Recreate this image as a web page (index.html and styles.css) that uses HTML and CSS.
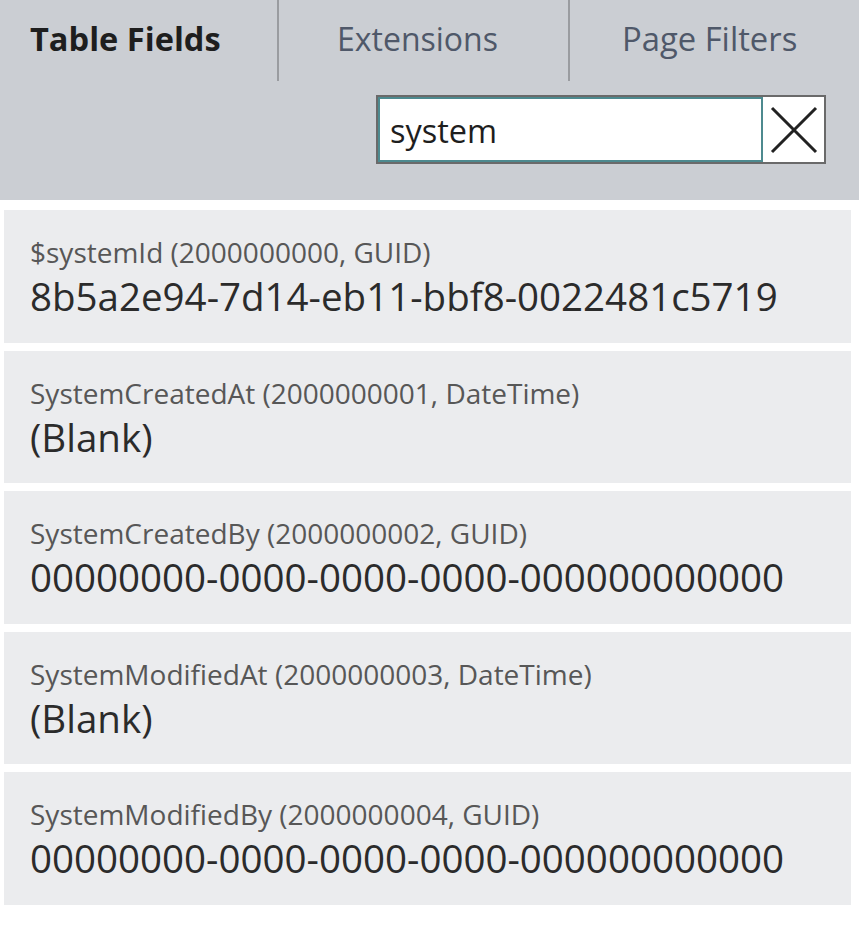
FILE: index.html
```html
<!DOCTYPE html>
<html>
<head>
<meta charset="utf-8">
<link rel="stylesheet" href="styles.css">
</head>
<body>
<div class="header">
  <div class="tabs">
    <div class="tab tab-active tab-1">Table Fields</div>
    <div class="tab tab-2">Extensions</div>
    <div class="tab tab-3">Page Filters</div>
  </div>
  <div class="search-row">
    <div class="search">
      <div class="search-input">system</div>
      <div class="search-clear">
        <svg width="48" height="48" viewBox="0 0 48 48"><path d="M2 2 L46 46 M46 2 L2 46" stroke="#222" stroke-width="3" fill="none"/></svg>
      </div>
    </div>
  </div>
</div>
<div class="list">
  <div class="card">
    <div class="label">$systemId (2000000000, GUID)</div>
    <div class="value">8b5a2e94-7d14-eb11-bbf8-0022481c5719</div>
  </div>
  <div class="card">
    <div class="label">SystemCreatedAt (2000000001, DateTime)</div>
    <div class="value">(Blank)</div>
  </div>
  <div class="card">
    <div class="label">SystemCreatedBy (2000000002, GUID)</div>
    <div class="value">00000000-0000-0000-0000-000000000000</div>
  </div>
  <div class="card">
    <div class="label">SystemModifiedAt (2000000003, DateTime)</div>
    <div class="value">(Blank)</div>
  </div>
  <div class="card">
    <div class="label">SystemModifiedBy (2000000004, GUID)</div>
    <div class="value">00000000-0000-0000-0000-000000000000</div>
  </div>
</div>
</body>
</html>
```
FILE: styles.css
```css
html, body {
  margin: 0;
  padding: 0;
  background: #ffffff;
  font-family: "Open Sans", "Noto Sans", sans-serif;
}
.header {
  background: #cbced3;
  height: 200px;
  box-sizing: border-box;
}
.tabs {
  display: flex;
  height: 81px;
}
.tab {
  font-size: 32px;
  color: #4f5869;
  padding-top: 14px;
  box-sizing: border-box;
  height: 81px;
  line-height: 50px;
}
.tab-active {
  font-weight: 700;
  font-size: 32.6px;
  color: #1e1e1e;
}
.tab-1 {
  width: 279px;
  padding-left: 30px;
  border-right: 2px solid #9a9ca0;
}
.tab-2 {
  width: 291px;
  padding-left: 58px;
  border-right: 2px solid #9a9ca0;
}
.tab-3 {
  flex: 1;
  padding-left: 52px;
  font-size: 32.8px;
}
.search-row {
  display: flex;
  justify-content: flex-end;
  padding-top: 14px;
  padding-right: 33px;
}
.search {
  display: flex;
  width: 450px;
  height: 69px;
  border: 2px solid #6a6a6a;
  box-sizing: border-box;
  background: #fff;
}
.search-input {
  flex: 1;
  border: 2px solid #4d8a8f;
  box-sizing: border-box;
  font-size: 32.5px;
  color: #1e1e1e;
  padding-left: 10px;
  padding-top: 2px;
  line-height: 60px;
  overflow: hidden;
}
.search-clear {
  width: 61px;
  display: flex;
  align-items: center;
  justify-content: center;
}
.list {
  display: flex;
  flex-direction: column;
  gap: 8px;
  padding: 10px 8px 0 4px;
}
.card {
  background: #ebecee;
  height: 132.5px;
  box-sizing: border-box;
  padding: 24px 0 0 26px;
}
.label {
  font-size: 28px;
  color: #575757;
  line-height: 36px;
}
.value {
  font-size: 38.5px;
  color: #2b2b2b;
  line-height: 53px;
}
```
